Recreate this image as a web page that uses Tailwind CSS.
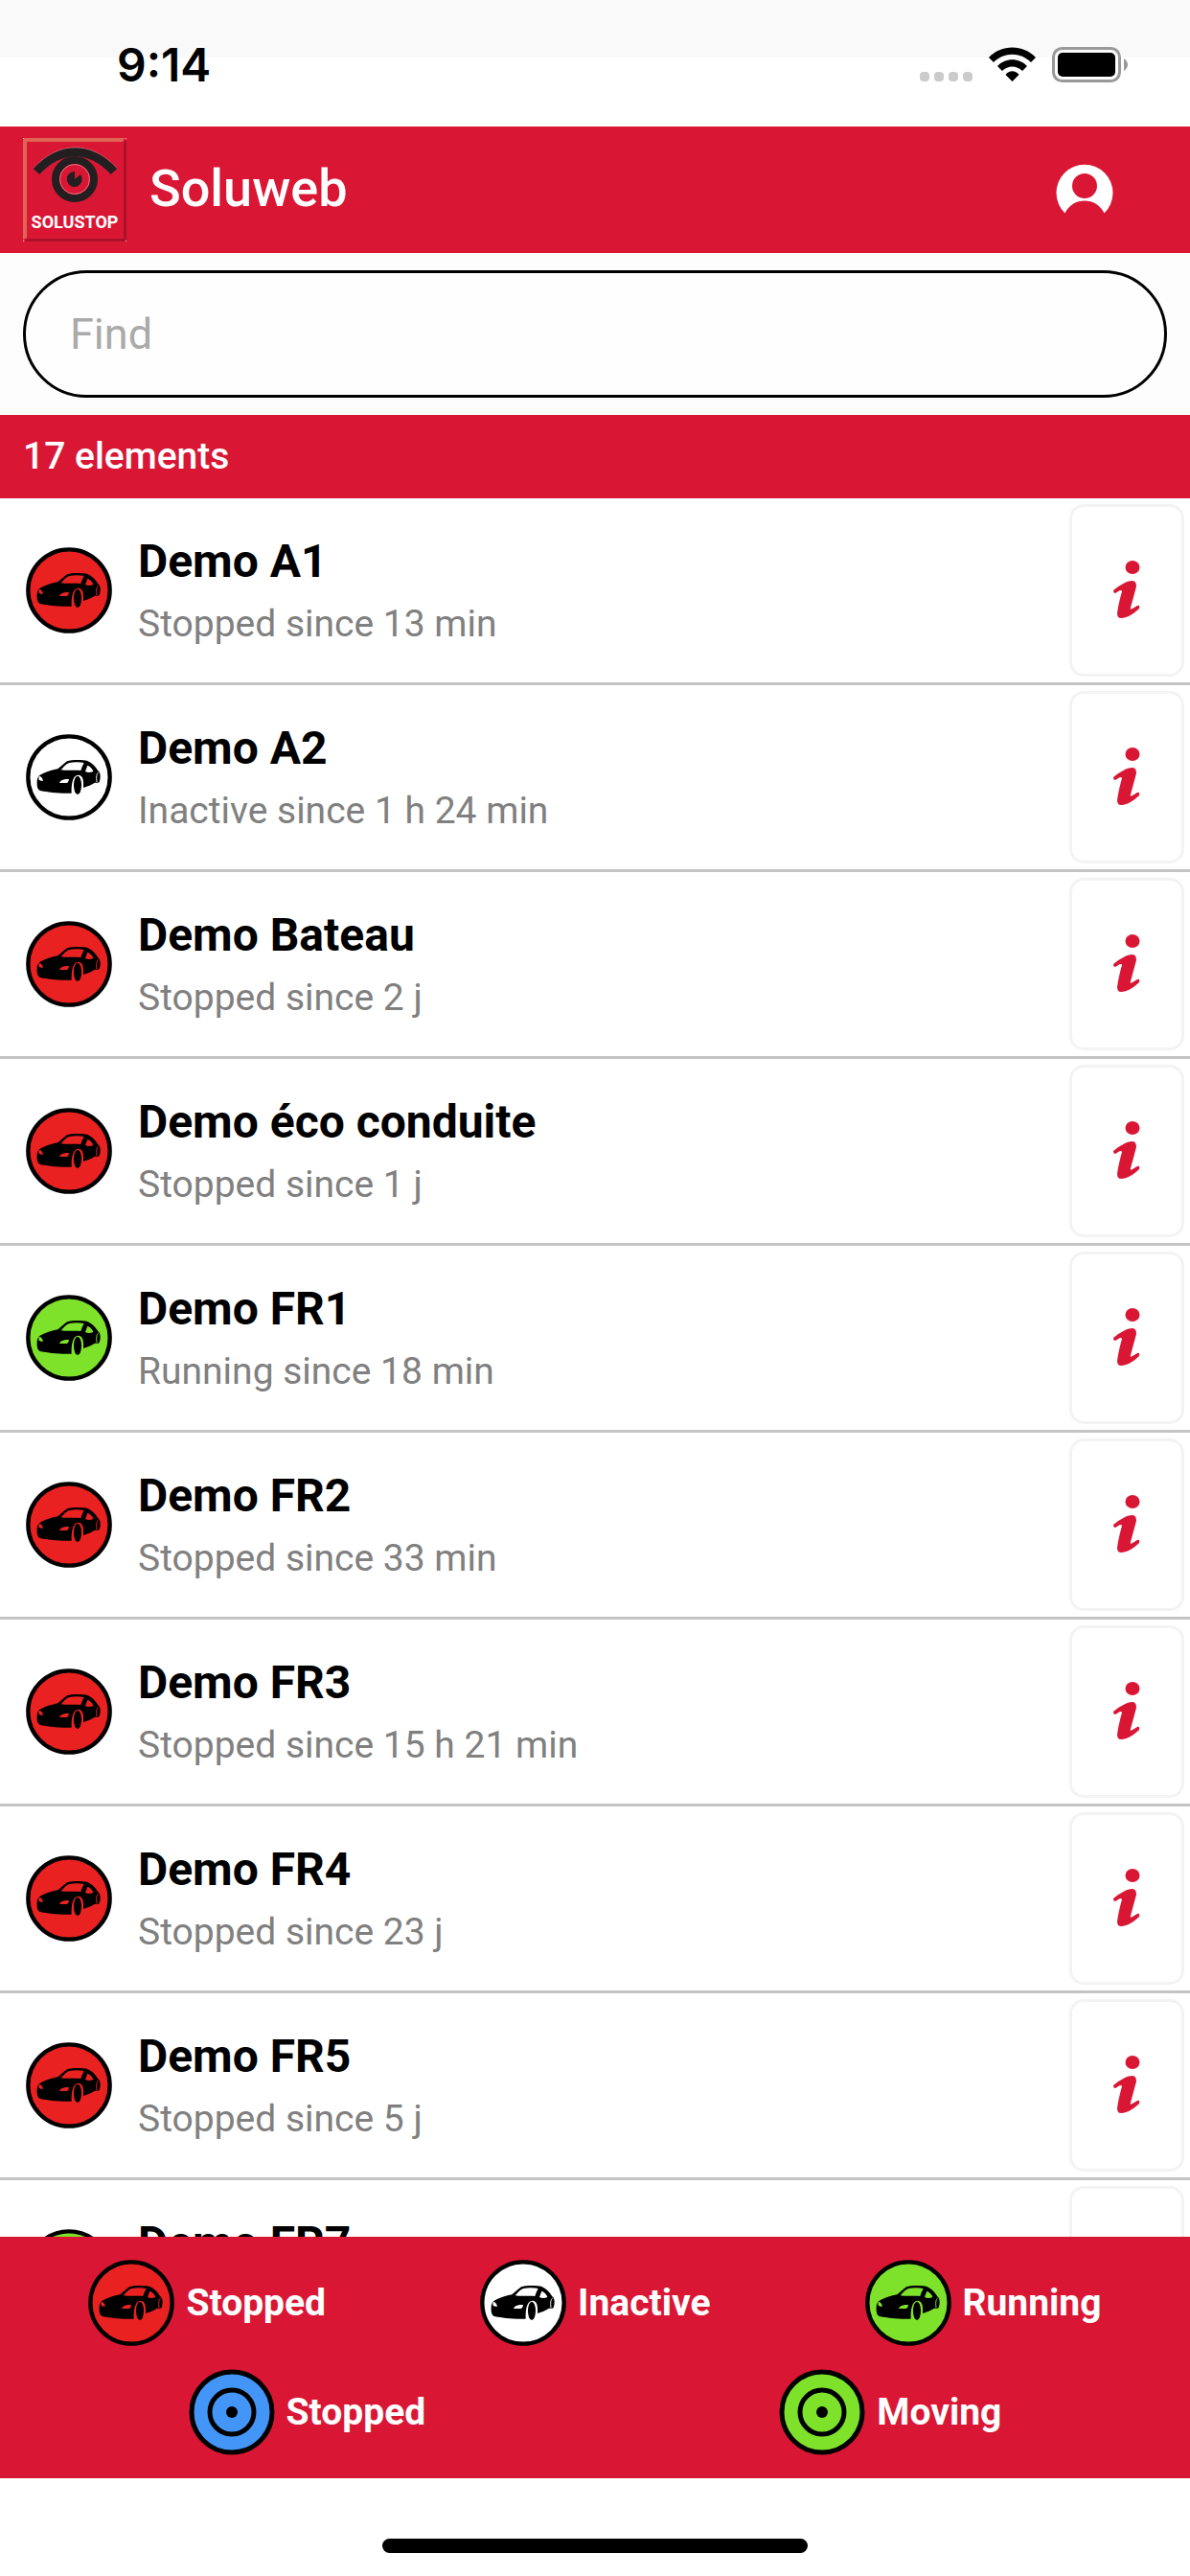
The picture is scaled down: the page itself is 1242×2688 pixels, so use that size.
<!DOCTYPE html>
<html lang="en">
<head>
    <meta charset="UTF-8">
    <meta name="viewport" content="width=device-width, initial-scale=1.0">
    <title>Soluweb</title>
    <script src="https://cdn.jsdelivr.net/npm/@tailwindcss/browser@4"></script>
</head>
<body class="flex h-screen flex-col overflow-hidden bg-white font-[Roboto,sans-serif] text-black">
    <!-- Shared icons -->
    <svg class="hidden" aria-hidden="true">
        <symbol id="car" viewBox="22 32 270 270">
            <circle cx="157" cy="167" r="128" fill="currentColor" stroke="#000" stroke-width="13"/>
            <path d="M57 181C57 166 64 159 78 154C92 148 108 144 122 141C132 134 140 124 151 117C164 112 200 112 215 116C228 121 240 133 248 147C256 151 257 170 252 182C247 186 243 184 238 184C228 190 215 196 204 199L166 217C130 219 90 214 70 210C59 207 56 198 57 181Z"/>
            <path d="M132 144C140 134 149 125 158 122C173 119 190 119 204 122C200 130 197 137 194 146C172 144 150 147 132 144ZM208 149L215 130C223 133 232 142 233 149C225 152 216 153 208 149ZM63 163C70 164 75 170 76 178C70 179 63 177 62 173ZM127 185C129 177 140 172 157 173C156 180 154 184 150 185Z" fill="currentColor"/>
            <path d="M165 217C164 190 168 161 186 160C202 161 203 178 202 200L202 224L165 222Z" fill="currentColor"/>
            <ellipse cx="184" cy="192" rx="12" ry="29"/>
            <path d="M244 182C242 168 243 156 249 152" fill="none" stroke="currentColor" stroke-width="3"/>
        </symbol>
        <symbol id="target" viewBox="0 0 90 90">
            <circle cx="45" cy="45" r="42" fill="currentColor" stroke="#000" stroke-width="5"/>
            <circle cx="45" cy="45" r="23" fill="none" stroke="#000" stroke-width="5"/>
            <circle cx="45" cy="45" r="6"/>
        </symbol>
        <symbol id="info" viewBox="0 0 28 60">
            <ellipse cx="20" cy="7" rx="7.500" ry="7"/>
            <path d="M0 31C6 26 14 21 20 21Q24 21 24 27L18 49Q17 52 20 50L25 47Q28 46 27 50C23 54 15 60 8 60Q4 60 4 55C5 47 7 39 9 32Q9 31 7 31L2 34Q0 34 0 31Z"/>
        </symbol>
    </svg>

    <!-- Status bar -->
    <div class="flex h-[132px] shrink-0 justify-between bg-linear-to-b from-[#f9f9f9] from-[60px] to-white to-[60px] pr-16 pl-[122px]">
        <span class="pt-[38px] font-[Inter,sans-serif] text-[48px] leading-[60px] font-semibold">9:14</span>
        <svg class="mt-[45px] h-[45px] w-[218px]" viewBox="960 45 218 45" aria-hidden="true">
            <g fill="#cbcbcb">
                <rect x="960" y="75" width="10" height="10" rx="4"/>
                <rect x="975" y="75" width="10" height="10" rx="4"/>
                <rect x="990" y="75" width="10" height="10" rx="4"/>
                <rect x="1005" y="75" width="10" height="10" rx="4"/>
            </g>
            <path d="M1032 60C1045 46 1068 46 1081 60L1076 65C1065 54 1048 54 1037 65ZM1041 69C1049 60 1064 60 1072 69L1067 74C1061 68 1052 68 1046 74ZM1049.500 78C1053 73 1060 73 1063.500 78L1056.500 85Z"/>
            <rect x="1099.500" y="50.500" width="69" height="34" rx="9" fill="none" stroke="#999" stroke-width="3"/>
            <rect x="1104" y="55" width="60" height="25" rx="5"/>
            <path d="M1173 61Q1177 64 1177 67.500T1173 74Z" fill="#999"/>
        </svg>
    </div>

    <!-- Header -->
    <header class="flex h-[132px] shrink-0 items-center bg-[#d91735] pr-20 pl-6 text-white">
        <svg class="size-[108px]" viewBox="0 0 108 108" role="img" aria-label="Solustop">
            <rect width="108" height="108" fill="#fff"/>
            <rect width="108" height="108" rx="2" fill="#d91735"/>
            <path d="M2 0H106L104 4H4V104L0 106V2Z" fill="#e06455"/>
            <path d="M108 2V106L106 108H2L4 105H105V4Z" fill="#ad1029"/>
            <path d="M14 34.500C39 7 70 7 95 34.500" fill="none" stroke="#e8707f" stroke-width="9"/>
            <path d="M14 35C39 8 70 8 95 35" fill="none" stroke="#231f20" stroke-width="9"/>
            <circle cx="54" cy="43" r="20" fill="none" stroke="#231f20" stroke-width="8"/>
            <circle cx="54" cy="43" r="15.500" fill="none" stroke="#e8707f" stroke-width="1"/>
            <path d="M54 43V35A8 8 0 1 0 60 38Z" fill="#231f20"/>
            <text x="54" y="94" text-anchor="middle" fill="#fff" font-family="Roboto, sans-serif" font-size="18" font-weight="700">SOLUSTOP</text>
        </svg>
        <h1 class="ml-6 flex-1 pb-1 text-[54px] leading-[63px] font-medium">Soluweb</h1>
        <button type="button" aria-label="Account">
            <svg class="size-[60px]" viewBox="0 -3 60 60" fill="#fff">
                <path fill-rule="evenodd" d="M9.500 51.500A29.500 29.500 0 1 1 50.500 51.500C43 34 17 34 9.500 51.500ZM30 10A13 13 0 1 0 30 36A13 13 0 1 0 30 10Z"/>
            </svg>
        </button>
    </header>

    <!-- Search -->
    <form class="shrink-0 bg-[#fdfdfd] px-6 py-[18px]">
        <input type="search" aria-label="Find" placeholder="Find" class="block h-[133px] w-full rounded-full border-3 border-black bg-[#fefefe] px-[46px] text-[45px] placeholder:text-[#aaaaaa]">
    </form>

    <h2 class="shrink-0 bg-[#d91735] px-6 py-5 text-[39px] leading-[47px] font-medium text-white">17 elements</h2>

    <!-- Vehicle list -->
    <ul id="vehicleList" class="min-h-0 flex-1 overflow-hidden"></ul>

    <!-- Legend -->
    <footer class="flex shrink-0 flex-col gap-6 bg-[#d91735] px-3 py-6 text-[39px] leading-[46px] font-bold text-white">
        <div class="flex justify-around">
            <div class="flex items-center gap-3">
                <svg class="size-[90px] text-[#e92121]"><use href="#car"/></svg>
                <span>Stopped</span>
            </div>
            <div class="flex items-center gap-3">
                <svg class="size-[90px] text-white"><use href="#car"/></svg>
                <span>Inactive</span>
            </div>
            <div class="flex items-center gap-3">
                <svg class="size-[90px] text-[#7ee22b]"><use href="#car"/></svg>
                <span>Running</span>
            </div>
        </div>
        <div class="flex justify-around">
            <div class="flex items-center gap-3">
                <svg class="size-[90px] text-[#4396f7]"><use href="#target"/></svg>
                <span>Stopped</span>
            </div>
            <div class="flex items-center gap-3">
                <svg class="size-[90px] text-[#7ee22b]"><use href="#target"/></svg>
                <span>Moving</span>
            </div>
        </div>
    </footer>

    <!-- Home indicator -->
    <div class="flex h-[102px] shrink-0 items-end justify-center pb-6">
        <div class="h-[15px] w-[444px] rounded-full bg-black"></div>
    </div>

    <script>
        const vehicles = [
            { name: 'Demo A1', status: 'Stopped', since: '13 min' },
            { name: 'Demo A2', status: 'Inactive', since: '1 h 24 min' },
            { name: 'Demo Bateau', status: 'Stopped', since: '2 j' },
            { name: 'Demo éco conduite', status: 'Stopped', since: '1 j' },
            { name: 'Demo FR1', status: 'Running', since: '18 min' },
            { name: 'Demo FR2', status: 'Stopped', since: '33 min' },
            { name: 'Demo FR3', status: 'Stopped', since: '15 h 21 min' },
            { name: 'Demo FR4', status: 'Stopped', since: '23 j' },
            { name: 'Demo FR5', status: 'Stopped', since: '5 j' },
            { name: 'Demo FR7', status: 'Running', since: '2 min' }
        ];

        const statusColors = {
            Stopped: 'text-[#e92121]',
            Inactive: 'text-white',
            Running: 'text-[#7ee22b]'
        };

        document.getElementById('vehicleList').innerHTML = vehicles.map(v => `
            <li class="flex items-center border-b-3 border-[#c4c4c4] py-1.5 pr-1.5 pl-[27px]">
                <svg class="size-[90px] shrink-0 ${statusColors[v.status]}"><use href="#car"/></svg>
                <div class="ml-[27px] flex min-w-0 flex-1 flex-col gap-[14px] pb-px">
                    <h3 class="truncate text-[48px] leading-[56px] font-bold">${v.name}</h3>
                    <p class="truncate text-[39px] leading-[46px] text-[#808080]">${v.status} since ${v.since}</p>
                </div>
                <button type="button" aria-label="Details of ${v.name}" class="flex h-[180px] w-[120px] items-center justify-center rounded-[15px] border-3 border-[#f3f3f3] pb-0.5 text-[#d91735]">
                    <svg class="h-[60px] w-7" fill="currentColor"><use href="#info"/></svg>
                </button>
            </li>
        `).join('');
    </script>
</body>
</html>
